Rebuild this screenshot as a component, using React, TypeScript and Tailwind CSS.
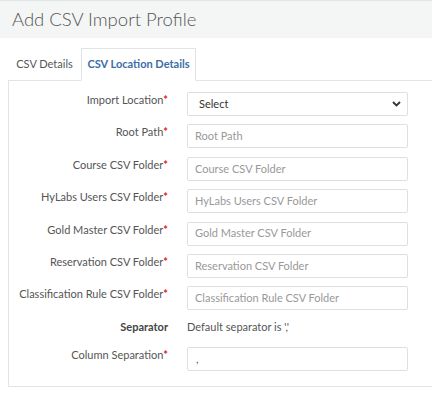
import React from "react";

const rows = [
  { label: "Root Path", ph: "Root Path" },
  { label: "Course CSV Folder", ph: "Course CSV Folder" },
  { label: "HyLabs Users CSV Folder", ph: "HyLabs Users CSV Folder" },
  { label: "Gold Master CSV Folder", ph: "Gold Master CSV Folder" },
  { label: "Reservation CSV Folder", ph: "Reservation CSV Folder" },
  { label: "Classification Rule CSV Folder", ph: "Classification Rule CSV Folder" },
];

function Label({ text, req = true, bold = false }: { text: string; req?: boolean; bold?: boolean }) {
  return (
    <div className={`w-[159px] shrink-0 text-right whitespace-nowrap leading-[16px] ${bold ? "font-bold text-[#444]" : "text-[#555]"}`}>
      {text}
      {req && <span className="text-[#e21b1b] font-bold">*</span>}
    </div>
  );
}

export default function App() {
  return (
    <div className="w-[432px] h-[395px] bg-white overflow-hidden font-['Lato',_sans-serif] text-[11px]">
      <div className="h-[38px] border-t border-[#e0e5e5] bg-[#f4f5f5] flex items-center pl-[12px] text-[18.5px] text-[#555] font-light whitespace-nowrap">
        Add CSV Import Profile
      </div>
      <div className="pt-[10px] pl-[8px]">
        <div className="flex border-b border-[#dfe5e5] h-[33px]">
          <div className="w-[73px] flex items-center justify-center text-[#555] whitespace-nowrap">CSV Details</div>
          <div className="w-[115px] flex items-center justify-center text-[#3a6ea8] font-bold border border-[#dfe5e5] border-b-white bg-white -mb-px h-[33px] whitespace-nowrap">
            CSV Location Details
          </div>
        </div>
        <div className="border-l border-b border-[#dfe5e5] pt-[11px] pb-[15px] flex flex-col gap-[8.4px]">
          <div className="flex items-start h-[24px]">
            <Label text="Import Location" />
            <div className="ml-[19px] w-[221px] h-[24px] border border-[#dbe1e1] rounded-[2px] flex items-center justify-between pl-[11px] pr-[6px] text-[#333]">
              <span>Select</span>
              <svg width="9" height="6" viewBox="0 0 9 6">
                <polyline points="1,1 4.5,4.5 8,1" fill="none" stroke="#333" strokeWidth="1.8" />
              </svg>
            </div>
          </div>
          {rows.map((r) => (
            <div key={r.label} className="flex items-start h-[24px]">
              <Label text={r.label} />
              <div className="ml-[19px] w-[221px] h-[24px] border border-[#dbe1e1] rounded-[2px] flex items-center pl-[7px] text-[#999] whitespace-nowrap">
                {r.ph}
              </div>
            </div>
          ))}
          <div className="flex items-start h-[20px]">
            <Label text="Separator" req={false} bold />
            <div className="ml-[19px] leading-[16px] text-[#555] whitespace-nowrap">Default separator is ','</div>
          </div>
          <div className="flex items-start h-[24px]">
            <Label text="Column Separation" />
            <div className="ml-[19px] w-[221px] h-[24px] border border-[#dbe1e1] rounded-[2px] flex items-center pl-[8px] text-[#555]">
              ,
            </div>
          </div>
        </div>
      </div>
    </div>
  );
}
